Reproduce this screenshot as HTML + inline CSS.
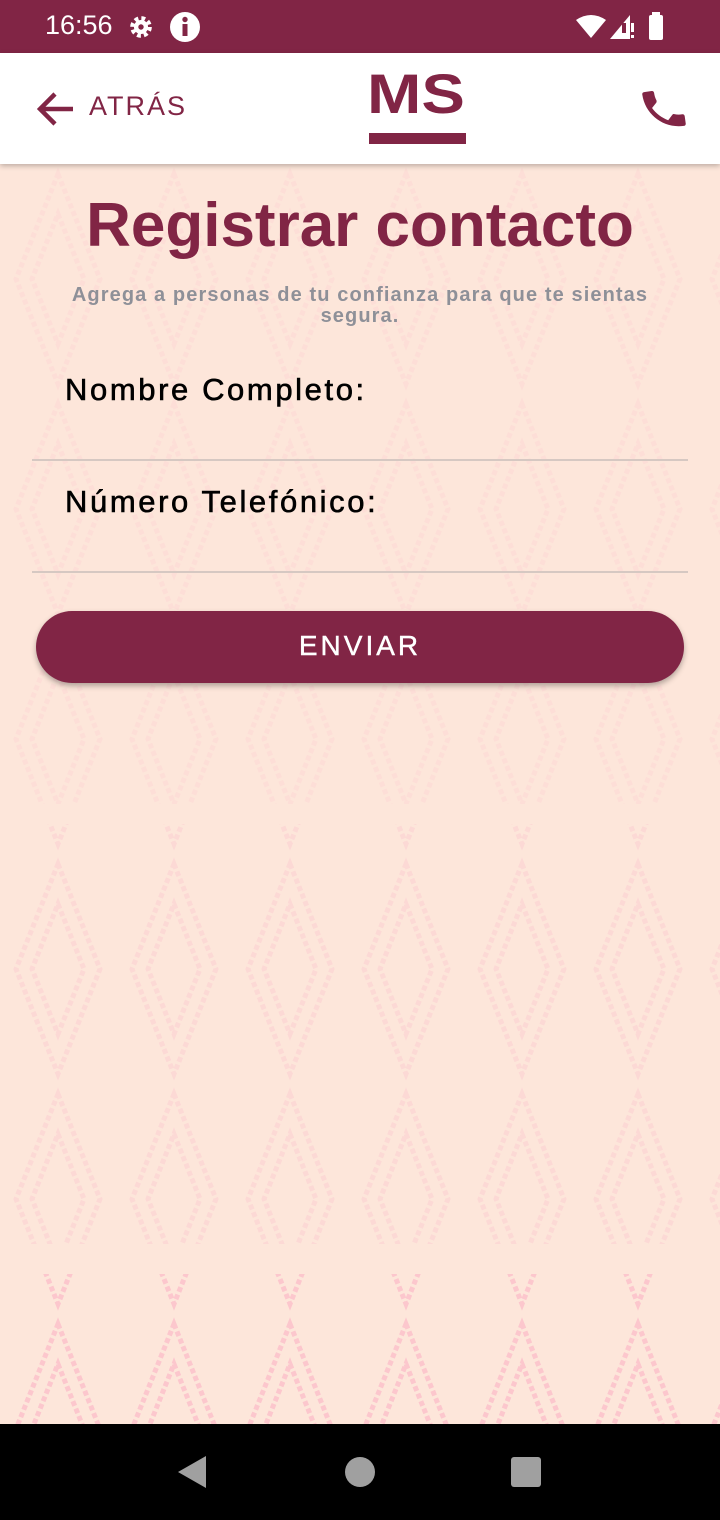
<!DOCTYPE html>
<html><head><meta charset="utf-8"><style>
*{margin:0;padding:0;box-sizing:border-box}
body{width:720px;height:1520px;position:relative;overflow:hidden;background:#fde6da;font-family:"Liberation Sans",sans-serif}
.sb{position:absolute;top:0;left:0;width:720px;height:53px;background:#812545;color:#fff}
.hdr{position:absolute;top:53px;left:0;width:720px;height:111px;background:#fff;box-shadow:0 2px 5px rgba(0,0,0,.25);z-index:2}
.nav{position:absolute;top:1424px;left:0;width:720px;height:96px;background:#000}
.pat{position:absolute;top:164px;left:0;width:720px;height:1260px}
.lbl{position:absolute;left:65px;font-size:31px;color:#000;letter-spacing:2.6px;-webkit-text-stroke:0.6px #000}
</style></head><body>
<svg class="pat" width="720" height="1260">
<defs>
<pattern id="d" width="116" height="230" patternUnits="userSpaceOnUse">
<path d="M58 10 L100 115 L58 220 L16 115 Z M58 50 L84 115 L58 180 L32 115 Z" fill="none" stroke="#fbb9c8" stroke-width="5" stroke-dasharray="5 3"/>
</pattern>
</defs>
<rect x="0" y="0" width="720" height="640" fill="url(#d)" opacity=".18"/>
<rect x="0" y="660" width="720" height="420" fill="url(#d)" opacity=".3"/>
<rect x="0" y="1110" width="720" height="150" fill="url(#d)" opacity=".7"/>
</svg>
<div class="sb">
<div style="position:absolute;left:45px;top:10px;font-size:27px">16:56</div>
<svg style="position:absolute;left:128px;top:14px" width="26" height="26" viewBox="0 0 24 24"><circle cx="12" cy="12" r="8" fill="none" stroke="#fff" stroke-width="4" stroke-dasharray="3.5 2.8"/><circle cx="12" cy="12" r="6.5" fill="#fff"/><circle cx="12" cy="12" r="2.5" fill="#812545"/></svg>
<svg style="position:absolute;left:169px;top:11px" width="32" height="32" viewBox="0 0 32 32"><circle cx="16" cy="16" r="15" fill="#fff"/><rect x="13.5" y="13" width="5" height="12" fill="#812545"/><circle cx="16" cy="8.5" r="2.7" fill="#812545"/></svg>
<svg style="position:absolute;left:575px;top:14px" width="32" height="26" viewBox="0 0 32 26"><path d="M1 6 Q16 -4 31 6 L16 24 Z" fill="#fff"/></svg>
<svg style="position:absolute;left:609px;top:14px" width="26" height="26" viewBox="0 0 26 26"><path d="M21 1 L21 25 L1 25 Z" fill="#fff"/><rect x="13" y="9" width="4" height="10" fill="#812545"/><rect x="22" y="9" width="3" height="9" fill="#fff"/><rect x="22" y="21" width="3" height="3" fill="#fff"/></svg>
<svg style="position:absolute;left:646px;top:12px" width="20" height="28" viewBox="0 0 20 28"><rect x="6" y="0" width="8" height="4" fill="#fff"/><rect x="3" y="3" width="14" height="25" rx="2" fill="#fff"/></svg>
</div>
<div class="hdr">
<svg style="position:absolute;left:37px;top:38px" width="38" height="36" viewBox="0 0 38 36"><path d="M36 18 H4 M18 3 L3 18 L18 33" fill="none" stroke="#812545" stroke-width="4.5"/></svg>
<div style="position:absolute;left:89px;top:38px;font-size:27px;color:#812545;letter-spacing:2px">ATRÁS</div>
<div style="position:absolute;left:367px;top:15px;font-size:48px;font-weight:bold;color:#812545;line-height:48px;transform:scale(1.36,1.16);transform-origin:left top">MS</div>
<div style="position:absolute;left:369px;top:80px;width:97px;height:11px;background:#812545"></div>
<svg style="position:absolute;left:638px;top:30px" width="52" height="52" viewBox="0 0 24 24"><path d="M6.6 10.8c1.4 2.8 3.8 5.1 6.6 6.6l2.2-2.2c.3-.3.7-.4 1-.2 1.1.4 2.3.6 3.6.6.6 0 1 .4 1 1V20c0 .6-.4 1-1 1C10.6 21 3 13.4 3 4c0-.6.4-1 1-1h3.5c.6 0 1 .4 1 1 0 1.3.2 2.5.6 3.6.1.3 0 .7-.2 1L6.6 10.8z" fill="#812545" transform="rotate(-8 12 12)"/></svg>
</div>
<div style="position:absolute;top:190px;left:0;width:720px;text-align:center;font-size:62px;font-weight:bold;color:#812545">Registrar contacto</div>
<div style="position:absolute;top:285px;left:50px;width:620px;text-align:center;font-size:20px;line-height:21px;color:#8e9098;font-weight:bold;letter-spacing:1.1px">Agrega a personas de tu confianza para que te sientas segura.</div>
<div class="lbl" style="top:372px">Nombre Completo:</div>
<div style="position:absolute;top:459px;left:32px;width:656px;height:2px;background:#d6c8c2"></div>
<div class="lbl" style="top:484px">Número Telefónico:</div>
<div style="position:absolute;top:571px;left:32px;width:656px;height:2px;background:#d6c8c2"></div>
<div style="position:absolute;top:611px;left:36px;width:648px;height:72px;border-radius:36px;background:#812545;box-shadow:0 3px 6px rgba(0,0,0,.3);color:#fff;font-size:28px;text-align:center;line-height:70px;letter-spacing:3px;-webkit-text-stroke:0.4px #fff">ENVIAR</div>
<div class="nav">
<svg style="position:absolute;left:176px;top:31px" width="32" height="34" viewBox="0 0 32 34"><path d="M30 1 L30 33 L2 17 Z" fill="#a0a0a0"/></svg>
<div style="position:absolute;left:345px;top:33px;width:30px;height:30px;border-radius:50%;background:#a0a0a0"></div>
<div style="position:absolute;left:511px;top:33px;width:30px;height:30px;border-radius:3px;background:#a0a0a0"></div>
</div>
</body></html>
